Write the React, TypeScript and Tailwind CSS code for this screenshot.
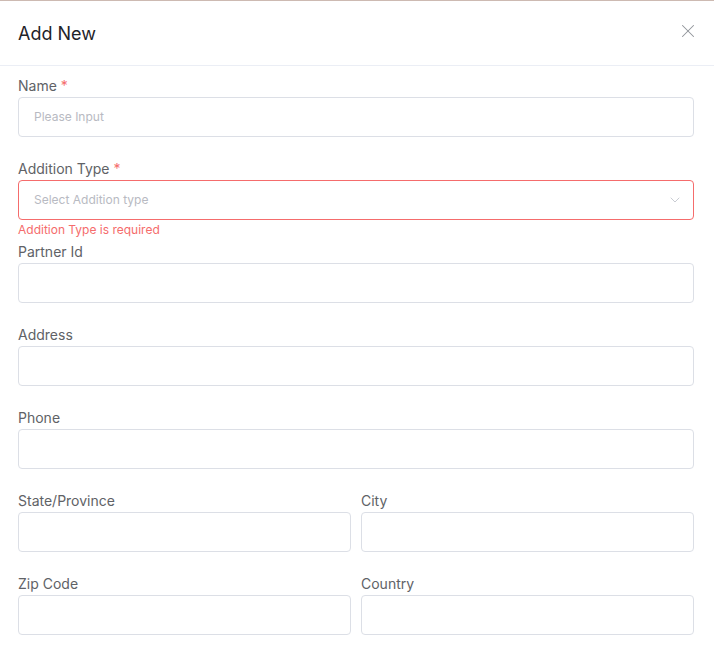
import { X, ChevronDown } from "lucide-react";

function Label({ text, required }: { text: string; required?: boolean }) {
  return (
    <div className="mb-[1px] h-[20px] text-[14px] leading-[20px] text-[#606266]">
      {text}
      {required ? <span className="ml-1 text-[#f56c6c]">*</span> : null}
    </div>
  );
}

function Field({
  label,
  required,
  placeholder,
  error,
  select,
}: {
  label: string;
  required?: boolean;
  placeholder?: string;
  error?: string;
  select?: boolean;
}) {
  return (
    <div className="relative pb-[22px]">
      <Label text={label} required={required} />
      <div
        className={[
          "flex h-[40px] items-center rounded-[4px] border bg-white pl-[15px] pr-[10px]",
          error ? "border-[#f56c6c]" : "border-[#dcdfe6]",
        ].join(" ")}
      >
        <span className="flex-1 text-[12px] text-[#b8bac2]">{placeholder}</span>
        {select ? <ChevronDown size={16} strokeWidth={1.3} className="text-[#c0c4cc]" /> : null}
      </div>
      {error ? (
        <div className="absolute left-0 top-[62px] text-[12px] leading-[18px] text-[#f56c6c]">
          {error}
        </div>
      ) : null}
    </div>
  );
}

export default function App() {
  return (
    <div
      className="flex h-[652px] w-[714px] flex-col overflow-hidden border-t border-[#cdbab2] bg-white"
      style={{ fontFamily: "Inter, 'Noto Sans', sans-serif" }}
    >
      <div className="flex h-[65px] shrink-0 items-center justify-between border-b border-[#ebeef5] pl-[18px] pr-[15px]">
        <h2 className="text-[18px] text-[#1f2329]">Add New</h2>
        <X size={22} strokeWidth={1.1} className="-mt-[4px] text-[#909399]" />
      </div>
      <div className="flex-1 pl-[18px] pr-[20px] pt-[10px]">
        <Field label="Name" required placeholder="Please Input" />
        <Field label="Addition Type" required placeholder="Select Addition type" error="Addition Type is required" select />
        <Field label="Partner Id" />
        <Field label="Address" />
        <Field label="Phone" />
        <div className="grid grid-cols-2 gap-x-[10px]">
          <Field label="State/Province" />
          <Field label="City" />
          <Field label="Zip Code" />
          <Field label="Country" />
        </div>
      </div>
      <div className="h-[8px] shrink-0 bg-[#fafafa]" />
    </div>
  );
}
